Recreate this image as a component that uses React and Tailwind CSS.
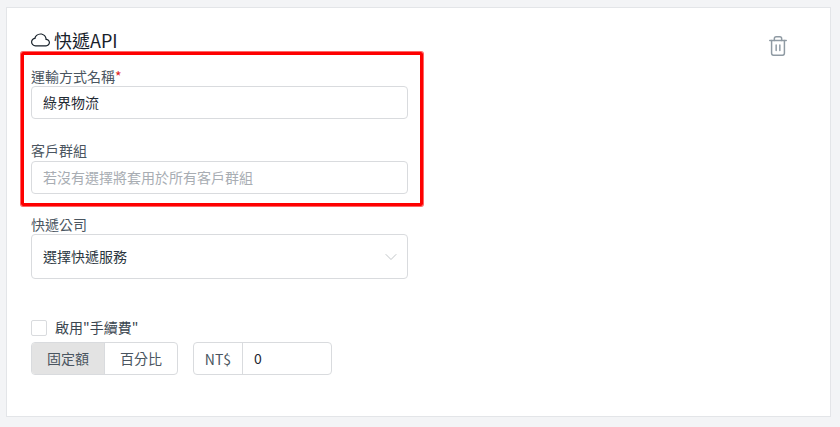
import { ChevronDown, Trash2 } from "lucide-react";
import { BsCloud } from "react-icons/bs";

const FONT = "font-['Noto_Sans_CJK_TC','Noto_Sans',sans-serif]";

function Label({ children, required, className = "" }) {
  return (
    <div className={`h-[20px] text-[14px] leading-[20px] text-[#4a5560] ${className}`}>
      {children}
      {required && <span className="text-[#e02424]">*</span>}
    </div>
  );
}

export default function App() {
  return (
    <div className={`relative h-[427px] w-[840px] overflow-hidden bg-[#f3f4f6] pt-[7px] pl-[6px] ${FONT}`}>
      <div className="flex h-[410px] w-[825px] justify-between border border-[#e3e5e8] bg-white pt-[19px] pr-[41px] pl-[24px]">
        <div className="w-[377px]">
          <div className="flex h-[26px] items-center gap-[4px] text-[18px] text-[#17212a]">
            <BsCloud className="h-[19px] w-[19px]" />
            <span>快遞API</span>
          </div>
          <Label required className="mt-[13px]">運輸方式名稱</Label>
          <div className="flex h-[33px] items-center rounded-[4px] border border-[#d9dbde] px-[11px] text-[14px] text-[#1f2a33]">
            綠界物流
          </div>
          <Label className="mt-[21px]">客戶群組</Label>
          <div className="mt-[1px] flex h-[33px] items-center rounded-[4px] border border-[#d9dbde] px-[11px] text-[14px] text-[#a8adb3]">
            若沒有選擇將套用於所有客戶群組
          </div>
          <Label className="mt-[20px]">快遞公司</Label>
          <div className="flex h-[45px] items-center justify-between rounded-[4px] border border-[#d9dbde] pr-[6px] pl-[11px] text-[14px] text-[#2b3640]">
            <span>選擇快遞服務</span>
            <ChevronDown className="h-[20px] w-[20px] text-[#b5b9bd]" strokeWidth={1} />
          </div>
          <div className="mt-[41px] flex h-[16px] items-center gap-[8px] text-[14px] text-[#3b4650]">
            <span className="h-[16px] w-[16px] rounded-[2px] border border-[#d9dbde]" />
            <span className="pb-[2px]">啟用"手續費"</span>
          </div>
          <div className="mt-[6px] flex gap-[15px] text-[14px]">
            <div className="flex h-[33px] w-[147px] overflow-hidden rounded-[4px] border border-[#d9dbde] text-[#4a5560]">
              <div className="flex w-[73px] items-center justify-center border-r border-[#d9dbde] bg-[#e3e3e3]">固定額</div>
              <div className="flex flex-1 items-center justify-center">百分比</div>
            </div>
            <div className="flex h-[33px] w-[139px] rounded-[4px] border border-[#d9dbde]">
              <div className="flex w-[49px] items-center justify-center border-r border-[#d9dbde] pt-[2px] text-[#4a5560]">NT$</div>
              <div className="flex flex-1 items-center pl-[11px] text-[#1f2a33]">0</div>
            </div>
          </div>
        </div>
        <Trash2 className="mt-[8px] h-[22px] w-[22px] text-[#8f9aa3]" strokeWidth={1.6} />
      </div>
      <div className="absolute top-[52px] left-[21px] h-[154px] w-[402px] rounded-[2px] border-[3px] border-[#fe0000] shadow-[0_0_0_1px_rgba(254,0,0,0.6)]" />
    </div>
  );
}
